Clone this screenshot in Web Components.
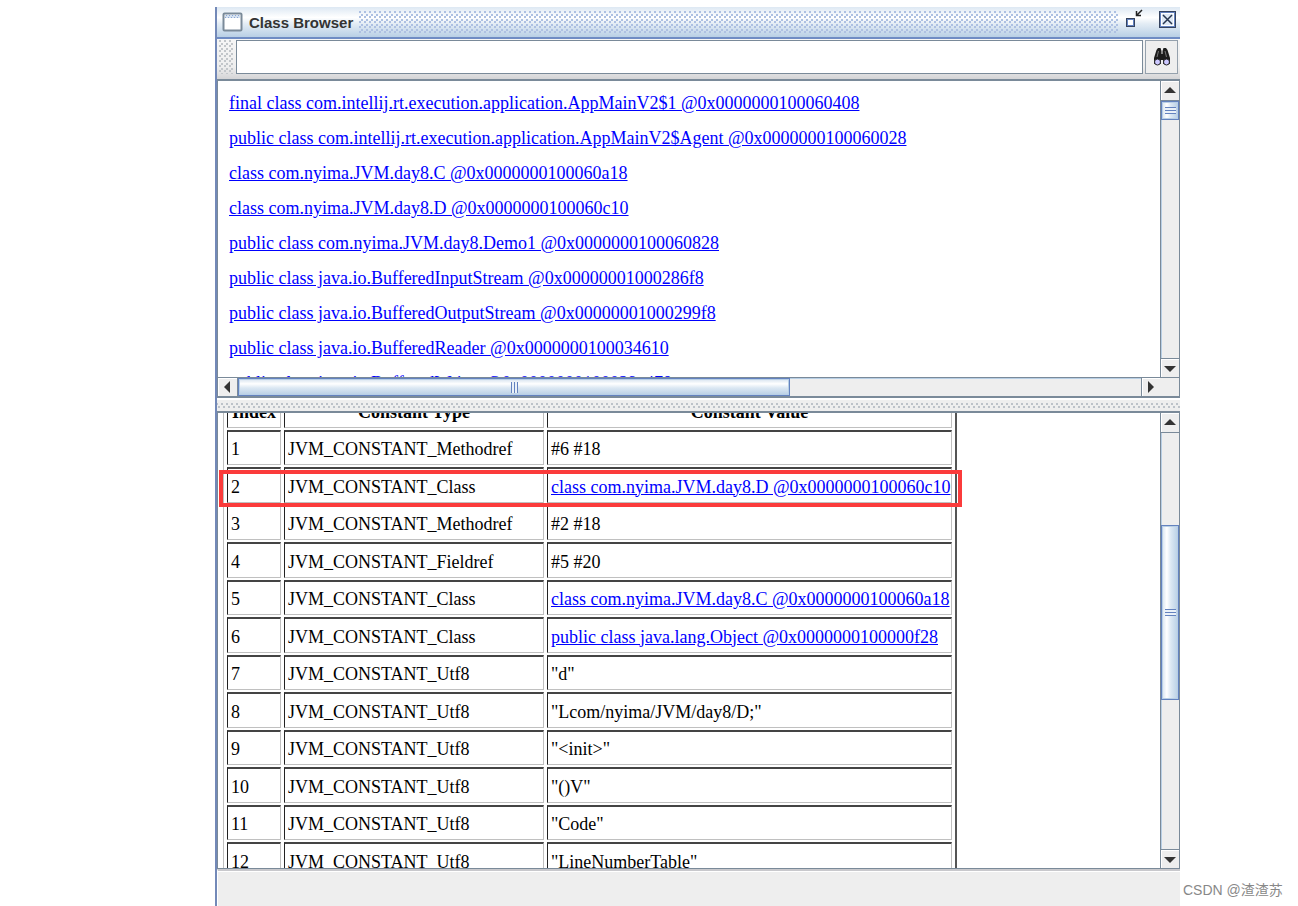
<!DOCTYPE html>
<html lang="en">
<head>
<meta charset="utf-8">
<title>Class Browser</title>
<style>
html, body {
	margin: 0;
	height: 100%;
	background: #ffffff;
}
body {
	display: grid;
	grid-template-columns: minmax(0, 965fr) 118px;
	box-sizing: border-box;
	height: 100vh;
	padding: 7px 0 0 215px;
	overflow: hidden;
	font-family: "Liberation Serif", "Times New Roman", serif;
	font-size: 18px;
	color: #000000;
}
</style>
</head>
<body>
<class-browser>
	<title-bar slot="title">Class Browser</title-bar>
	<search-bar slot="search"></search-bar>
	<scroll-pane slot="list" horizontal vstart="0" vsize="19" vrest="239" hstart="0" hsize="552" hrest="351">
		<class-list></class-list>
	</scroll-pane>
	<scroll-pane slot="detail" vstart="92" vsize="174" vrest="149">
		<constant-pool></constant-pool>
	</scroll-pane>
</class-browser>
<page-credit>CSDN @渣渣苏</page-credit>
<script>
const CLASSES = [
	'final class com.intellij.rt.execution.application.AppMainV2$1 @0x0000000100060408',
	'public class com.intellij.rt.execution.application.AppMainV2$Agent @0x0000000100060028',
	'class com.nyima.JVM.day8.C @0x0000000100060a18',
	'class com.nyima.JVM.day8.D @0x0000000100060c10',
	'public class com.nyima.JVM.day8.Demo1 @0x0000000100060828',
	'public class java.io.BufferedInputStream @0x00000001000286f8',
	'public class java.io.BufferedOutputStream @0x00000001000299f8',
	'public class java.io.BufferedReader @0x0000000100034610',
	'public class java.io.BufferedWriter @0x0000000100029e478'
];

// [type, value, is link]
const POOL = [
	['Methodref', '#6 #18'],
	['Class', 'class com.nyima.JVM.day8.D @0x0000000100060c10', true],
	['Methodref', '#2 #18'],
	['Fieldref', '#5 #20'],
	['Class', 'class com.nyima.JVM.day8.C @0x0000000100060a18', true],
	['Class', 'public class java.lang.Object @0x0000000100000f28', true],
	['Utf8', '"d"'],
	['Utf8', '"Lcom/nyima/JVM/day8/D;"'],
	['Utf8', '"<init>"'],
	['Utf8', '"()V"'],
	['Utf8', '"Code"'],
	['Utf8', '"LineNumberTable"']
];

function attach(el, html) {
	const tpl = document.createElement('template');
	tpl.innerHTML = html;
	el.attachShadow({ mode: 'open' }).appendChild(tpl.content.cloneNode(true));
	return el.shadowRoot;
}

// the Metal look's bumps: small dots in two staggered rows
function bumps(color, x = 0, y = 0) {
	const dot = `conic-gradient(from 270deg at 2px 2px, ${color} 90deg, transparent 0)`;
	const repeat = y ? 'repeat-x' : 'repeat';
	return `${dot} ${x}px ${y}px / 5px 5px ${repeat}, ${dot} ${x + 2}px ${y + 3}px / 5px 5px ${repeat}`;
}

class ClassBrowser extends HTMLElement {
	constructor() {
		super();
		attach(this, `<style>
:host {
	display: grid;
	grid-template-rows: 32px 40px minmax(0, 319fr) 13px minmax(0, 458fr) 37px;
	min-width: 0;
	min-height: 0;
	border-left: 2px solid #7389b8;
	background: #eeeeee;
}
#divider {
	background: ${bumps('#bcc2c9', 4, 3)}, #eeeeee;
	border-top: 2px solid #ffffff;
	box-sizing: border-box;
}
#status {
	box-sizing: border-box;
	border-top: 2px solid #c8c8cc;
	border-left: 1px solid #ffffff;
	box-shadow: inset 0 1px #ffffff;
}
</style>
<slot name="title"></slot>
<slot name="search"></slot>
<slot name="list"></slot>
<div id="divider"></div>
<slot name="detail"></slot>
<div id="status"></div>`);
	}
}

class TitleBar extends HTMLElement {
	constructor() {
		super();
		attach(this, `<style>
:host {
	display: flex;
	align-items: center;
	gap: 6px;
	box-sizing: border-box;
	padding: 0 3px 0 5px;
	border-bottom: 2px solid #6f8cc4;
	background: linear-gradient(#dde8f3, #ffffff 35%, #e4edf5 55%, #b8cfe5);
	font: bold 15px "Liberation Sans", Arial, sans-serif;
	color: #333333;
}
svg {
	display: block;
}
#dots {
	flex: 1;
	height: 22px;
	background: ${bumps('#adc0e2')};
}
button {
	margin-bottom: 6px;
	padding: 0;
	border: 0;
	background: none;
}
#max {
	margin-right: 9px;
}
</style>
<svg width="21" height="20" viewBox="0 0 21 20">
	<rect x="1.5" y="1.5" width="18" height="17" rx="1" fill="#fff" stroke="#7a8a99" stroke-width="2"/>
	<path d="M3 3H18V6H3Z" fill="#d4e1f0"/>
	<path d="M4 3.5H18M3 5.5H18" stroke="#8aa5d6" stroke-dasharray="1 2"/>
</svg>
<span><slot></slot></span>
<div id="dots"></div>
<button id="max" aria-label="Restore"><svg width="18" height="20" viewBox="0 0 18 20">
	<rect x="1" y="9" width="9" height="9" fill="#34435f"/>
	<rect x="2" y="10" width="7" height="7" fill="#6382bf"/>
	<rect x="3" y="11" width="5" height="5" fill="#fff"/>
	<path d="M17 1L12 6M11.5 2V6.5H16" fill="none" stroke="#222" stroke-width="1.5"/>
</svg></button>
<button aria-label="Close"><svg width="19" height="19" viewBox="0 0 19 19">
	<rect x="1.5" y="1.5" width="16" height="16" fill="#dde8f5" stroke="#34435f"/>
	<rect x="2.5" y="2.5" width="14" height="14" fill="none" stroke="#6382bf"/>
	<rect x="3.5" y="3.5" width="12" height="12" fill="none" stroke="#fff"/>
	<path d="M5 5L14 14M14 5L5 14" stroke="#27364f" stroke-width="1.5"/>
</svg></button>`);
	}
}

class SearchBar extends HTMLElement {
	constructor() {
		super();
		attach(this, `<style>
:host {
	display: flex;
	gap: 2px;
	box-sizing: border-box;
	padding: 1px 2px 5px 2px;
	background: linear-gradient(#f6f6f6, #eeeeee 70%, #d4d4d6);
}
#grip {
	width: 15px;
	background: ${bumps('#c2c6ca')};
}
input {
	flex: 1;
	min-width: 0;
	box-sizing: border-box;
	border: 1px solid #7a8a99;
	background: #ffffff;
	font: 16px "Liberation Sans", Arial, sans-serif;
	outline: 0;
}
button {
	width: 33px;
	padding: 0;
	border: 1px solid #94a0ac;
	background: #eeeeee;
	display: flex;
	align-items: center;
	justify-content: center;
}
</style>
<div id="grip"></div>
<input type="text" aria-label="Find class">
<button aria-label="Find"><svg width="18" height="18" viewBox="0 0 18 18">
	<path d="M3.500 2L5 0H7.500L8.500 3V6H9.500V3L10.500 0H13L14.500 2L17 10V16H10V12H8V16H1V10Z" fill="#1c1c1c"/>
	<path d="M5.500 3L4 9M12 3L13.500 9" stroke="#777"/>
	<circle cx="4.500" cy="14" r="3" fill="#ccc8ff" stroke="#222"/>
	<circle cx="13.500" cy="14" r="3" fill="#ccc8ff" stroke="#222"/>
</svg></button>`);
	}
}

class ScrollBar extends HTMLElement {
	connectedCallback() {
		if (this.shadowRoot) return;
		const horizontal = this.hasAttribute('horizontal');
		const axis = horizontal ? 'columns' : 'rows';
		const [start, size, rest] = ['start', 'size', 'rest'].map(n => this.getAttribute(n) + 'fr');
		const back = horizontal ? 'M11 3V15L5 9Z' : 'M3 11H15L9 5Z';
		const next = horizontal ? 'M6 3V15L12 9Z' : 'M3 7H15L9 13Z';
		attach(this, `<style>
:host {
	display: grid;
	grid-template-${axis}: 20px minmax(0, ${start}) minmax(0, ${size}) minmax(0, ${rest}) 19px;
	box-sizing: border-box;
	min-width: 0;
	min-height: 0;
	background: #eeeeee;
	border: 0 solid #7a8a99;
	border-${horizontal ? 'top' : 'left'}-width: 1px;
	border-${horizontal ? 'bottom' : 'right'}-width: 1px;
	box-shadow: inset 1px 1px #b8cfe5;
}
button {
	display: flex;
	align-items: center;
	justify-content: center;
	min-width: 0;
	padding: 0;
	border: 0 solid #7a8a99;
	background: #eeeeee;
	box-shadow: inset 1px 1px #ffffff;
}
#back {
	border-${horizontal ? 'right' : 'bottom'}-width: 1px;
}
#next {
	border-${horizontal ? 'left' : 'top'}-width: 1px;
}
#thumb {
	display: flex;
	align-items: center;
	justify-content: center;
	box-sizing: border-box;
	border: 1px solid #6382bf;
	box-shadow: inset 0 0 0 1px #b8cfe5;
	background: linear-gradient(to ${horizontal ? 'bottom' : 'right'}, #d5e2ef, #ffffff 30%, #dce8f3 55%, #b8cfe5);
}
#grip {
	width: ${horizontal ? 7 : 11}px;
	height: ${horizontal ? 11 : 7}px;
	background: repeating-linear-gradient(to ${horizontal ? 'right' : 'bottom'}, #6382bf 0 1px, #eaf1f8 1px 3px);
}
svg {
	flex: none;
}
</style>
<button id="back" aria-label="Scroll back"><svg width="18" height="18"><path d="${back}" fill="#333"/></svg></button>
<div></div>
<div id="thumb"><div id="grip"></div></div>
<div></div>
<button id="next" aria-label="Scroll forward"><svg width="18" height="18"><path d="${next}" fill="#333"/></svg></button>`);
	}
}

class ScrollPane extends HTMLElement {
	connectedCallback() {
		if (this.shadowRoot) return;
		const horizontal = this.hasAttribute('horizontal');
		const bar = p => ['start', 'size', 'rest'].map(n => `${n}="${this.getAttribute(p + n)}"`).join(' ');
		attach(this, `<style>
:host {
	display: grid;
	grid-template-columns: minmax(0, 1fr) 20px;
	grid-template-rows: minmax(0, 1fr)${horizontal ? ' 20px' : ''};
	box-sizing: border-box;
	min-height: 0;
	border: 1px solid #7a8a99;
	border-top-width: 2px;
	border-right-width: 0;
	background: #eeeeee;
}
#view {
	overflow: hidden;
	background: #ffffff;
}
#corner {
	border: 1px solid #7a8a99;
	border-width: 1px 1px 1px 0;
}
</style>
<div id="view"><slot></slot></div>
<scroll-bar ${bar('v')}></scroll-bar>
${horizontal ? `<scroll-bar horizontal ${bar('h')}></scroll-bar><div id="corner"></div>` : ''}`);
	}
}

class ClassList extends HTMLElement {
	constructor() {
		super();
		const root = attach(this, `<style>
:host {
	display: block;
	padding: 5px 0 0 11px;
	white-space: nowrap;
}
a {
	display: block;
	width: max-content;
	line-height: 35px;
	color: #0000ff;
}
</style>`);
		for (const name of CLASSES) {
			const a = document.createElement('a');
			a.href = '#';
			a.textContent = name;
			root.appendChild(a);
		}
	}
}

class ConstantPool extends HTMLElement {
	constructor() {
		super();
		const root = attach(this, `<style>
:host {
	display: block;
	position: relative;
	margin-top: -23px;
	padding-left: 5px;
}
table {
	width: 734px;
	table-layout: fixed;
	border: 1px solid #c0c0c0;
	border-right: 2px solid #555555;
	border-spacing: 3px 2px;
}
th, td {
	box-sizing: border-box;
	height: 35px;
	padding: 3px 3px 0;
	border: 1px solid #c0c0c0;
	border-top: 2px solid #444444;
	border-left-color: #222222;
	text-align: left;
	white-space: nowrap;
}
/* rows are 37 and 38 pixels apart in turn */
tr:nth-child(even) td {
	height: 36px;
}
th {
	text-align: center;
}
th:nth-child(1) {
	width: 54px;
}
th:nth-child(2) {
	width: 260px;
}
a {
	color: #0000ff;
}
#mark {
	position: absolute;
	left: 1px;
	top: 80px;
	width: 743px;
	height: 37px;
	box-sizing: border-box;
	border: 4px solid #fb3b3b;
}
</style>
<table>
	<thead><tr><th>Index</th><th>Constant Type</th><th>Constant Value</th></tr></thead>
	<tbody></tbody>
</table>
<div id="mark"></div>`);
		const body = root.querySelector('tbody');
		POOL.forEach(([type, value, link], i) => {
			const row = body.insertRow();
			row.insertCell().textContent = i + 1;
			row.insertCell().textContent = 'JVM_CONSTANT_' + type;
			const cell = row.insertCell();
			if (link) {
				const a = document.createElement('a');
				a.href = '#';
				a.textContent = value;
				cell.appendChild(a);
			} else {
				cell.textContent = value;
			}
		});
	}
}

class PageCredit extends HTMLElement {
	constructor() {
		super();
		attach(this, `<style>
:host {
	display: block;
	align-self: end;
	padding: 0 0 6px 3px;
	font: 14px/20px "Liberation Sans", "Noto Sans CJK SC", sans-serif;
	color: #888888;
	white-space: nowrap;
}
</style>
<slot></slot>`);
	}
}

customElements.define('scroll-bar', ScrollBar);
customElements.define('scroll-pane', ScrollPane);
customElements.define('title-bar', TitleBar);
customElements.define('search-bar', SearchBar);
customElements.define('class-list', ClassList);
customElements.define('constant-pool', ConstantPool);
customElements.define('class-browser', ClassBrowser);
customElements.define('page-credit', PageCredit);
</script>
</body>
</html>
